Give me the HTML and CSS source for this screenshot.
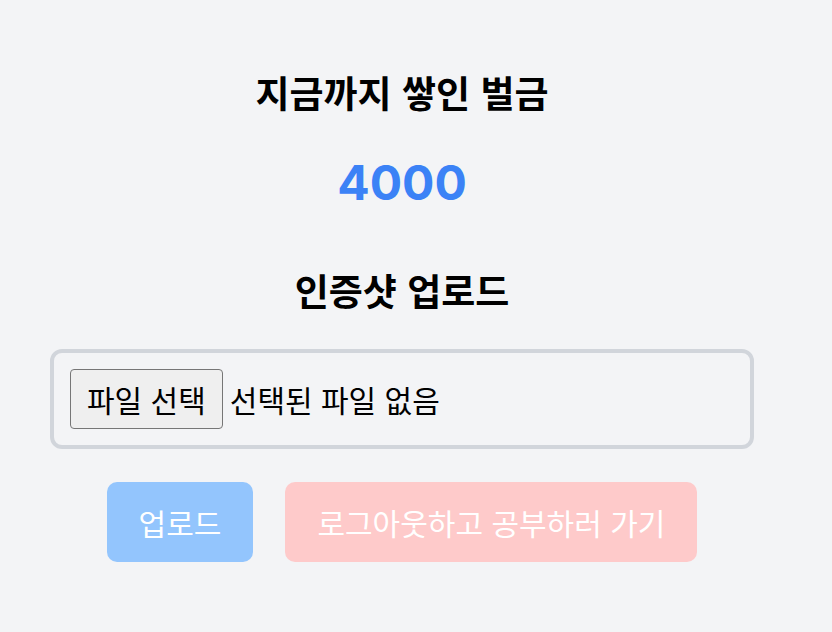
FILE: index.html
```html
<!DOCTYPE html>
<html lang="ko">
<head>
<meta charset="utf-8">
<link rel="stylesheet" href="styles.css">
</head>
<body>
<main class="page">
  <h1 class="title">지금까지 쌓인 벌금</h1>
  <p class="amount">4000</p>
  <h2 class="title sub">인증샷 업로드</h2>
  <div class="file-box">
    <label class="file">
      <input class="file-input" type="file">
      <span class="file-btn">파일 선택</span>
      <span class="file-name">선택된 파일 없음</span>
    </label>
  </div>
  <div class="actions">
    <button class="btn btn-blue" type="button">업로드</button>
    <button class="btn btn-red" type="button">로그아웃하고 공부하러 가기</button>
  </div>
</main>
</body>
</html>
```

FILE: styles.css
```css
html, body {
  margin: 0;
  padding: 0;
  background: #f3f4f6;
}
body {
  font-family: "Noto Sans CJK KR", "Noto Sans", sans-serif;
  color: #000;
}
.page {
  width: 704px;
  margin-left: 50px;
  padding-top: 69px;
  display: flex;
  flex-direction: column;
  align-items: center;
}
.title {
  margin: 0;
  font-size: 37px;
  font-weight: 700;
  line-height: 46px;
}
.amount {
  margin: 38px 0 0;
  font-family: "Inter", "Noto Sans", sans-serif;
  font-size: 48px;
  font-weight: 700;
  line-height: 60px;
  color: #3b82f6;
}
.sub {
  margin-top: 54px;
}
.file-box {
  margin-top: 36px;
  box-sizing: border-box;
  width: 704px;
  border: 4px solid #d1d5db;
  border-radius: 12px;
  padding: 16px;
}
.file {
  display: flex;
  align-items: center;
  gap: 7px;
  font-size: 30px;
  cursor: pointer;
}
.file-input {
  display: none;
}
.file-btn {
  box-sizing: border-box;
  height: 60px;
  padding: 0 16px;
  display: flex;
  align-items: center;
  background: #efefef;
  border: 1.5px solid #767676;
  border-radius: 4px;
}
.actions {
  margin-top: 33px;
  display: flex;
  gap: 32px;
}
.btn {
  height: 80px;
  padding: 0 32px;
  border: none;
  border-radius: 10px;
  color: #fff;
  font-family: "Noto Sans CJK KR", sans-serif;
  font-size: 30px;
}
.btn-blue { background: #93c5fd; }
.btn-red { background: #fecaca; }
```
